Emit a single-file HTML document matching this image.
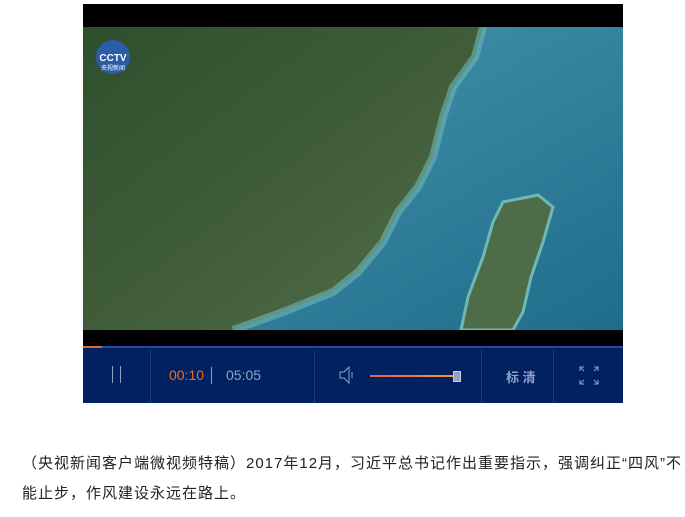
<!DOCTYPE html>
<html><head><meta charset="utf-8"><style>
body{margin:0;background:#fff;width:685px;height:517px;position:relative;overflow:hidden;font-family:"Liberation Sans","Noto Sans CJK SC",sans-serif}
.v{position:absolute;left:83px;top:4px;width:540px;height:399px;background:#000;overflow:hidden}
.map{position:absolute;left:0;top:23px}
.ctl{position:absolute;left:0;top:342px;width:540px;height:55px;background:#022161;border-top:2px solid #1e4aa0}
.sep{position:absolute;top:2px;bottom:0;width:1px;background:#143a85}
.t{position:absolute;font-size:14px;top:19px}
p{position:absolute;left:22px;top:449px;margin:0;width:662px;font-size:15px;letter-spacing:1px;line-height:30px;color:#222}
</style></head><body>
<div class="v">
<svg class="map" width="540" height="303" viewBox="0 0 540 303">
<defs>
<linearGradient id="s" x1="0" y1="0" x2="1" y2="1"><stop offset="0" stop-color="#4b9bb0"/><stop offset="1" stop-color="#1f6c8c"/></linearGradient>
<linearGradient id="l" x1="0" y1="0" x2="1" y2="1"><stop offset="0" stop-color="#2f4f2c"/><stop offset=".6" stop-color="#435f3c"/><stop offset="1" stop-color="#57704e"/></linearGradient>
</defs>
<rect width="540" height="303" fill="url(#s)"/>
<path d="M0 0H400L392 30L370 60L360 90L350 130L335 160L315 185L300 215L275 245L250 265L200 285L150 303H0Z" fill="url(#l)"/>
<path d="M400 0L392 30L370 60L360 90L350 130L335 160L315 185L300 215L275 245L250 265L200 285L150 303" fill="none" stroke="#6fb8b5" stroke-width="8" opacity=".6"/>
<path d="M420 175L455 168L470 180L460 215L448 250L440 285L430 303H378L385 270L400 230L410 195Z" fill="#4f6c48" stroke="#6fb8b5" stroke-width="3"/>
<circle cx="30" cy="30" r="17" fill="#2a5ca8"/>
<text x="30" y="34" fill="#fff" font-size="10" font-weight="bold" text-anchor="middle" font-family="Liberation Sans">CCTV</text>
<text x="30" y="43" fill="#fff" font-size="6" text-anchor="middle" font-family="Noto Sans CJK SC">央视新闻</text>
</svg>
<div style="position:absolute;left:0;top:342px;width:19px;height:2px;background:#e06a20;z-index:2"></div>
<div class="ctl">
<div class="sep" style="left:67px"></div><div class="sep" style="left:231px"></div><div class="sep" style="left:398px"></div><div class="sep" style="left:470px"></div>
<div style="position:absolute;left:29px;top:18px;width:1px;height:17px;background:#8ea3c8"></div>
<div style="position:absolute;left:37px;top:18px;width:1px;height:17px;background:#8ea3c8"></div>
<div class="t" style="left:86px;color:#e0702c">00:10</div>
<div style="position:absolute;left:128px;top:19px;width:1px;height:17px;background:#8ea3c8"></div>
<div class="t" style="left:143px;color:#8ea3c8">05:05</div>
<svg style="position:absolute;left:256px;top:18px" width="16" height="18"><path d="M1 6H5L10 1V17L5 12H1Z" fill="none" stroke="#8ea3c8"/><path d="M13 6V12" stroke="#8ea3c8"/></svg>
<div style="position:absolute;left:287px;top:27px;width:88px;height:2px;background:linear-gradient(90deg,#e06060,#f0a020)"></div>
<div style="position:absolute;left:370px;top:23px;width:6px;height:9px;background:#8ea3c8;border:1px solid #ccd"></div>
<div class="t" style="left:423px;color:#8ea3c8;font-weight:bold;font-size:13px">标 清</div>
<svg style="position:absolute;left:496px;top:18px" width="20" height="19" stroke="#8ea3c8" fill="none"><path d="M1 5V1H5M1 1L5 5M15 1H19V5M19 1L15 5M1 14V18H5M1 18L5 14M19 14V18H15M19 18L15 14"/></svg>
</div>
</div>
<p>（央视新闻客户端微视频特稿）2017年12月，习近平总书记作出重要指示，强调纠正“四风”不能止步，作风建设永远在路上。</p>
</body></html>
